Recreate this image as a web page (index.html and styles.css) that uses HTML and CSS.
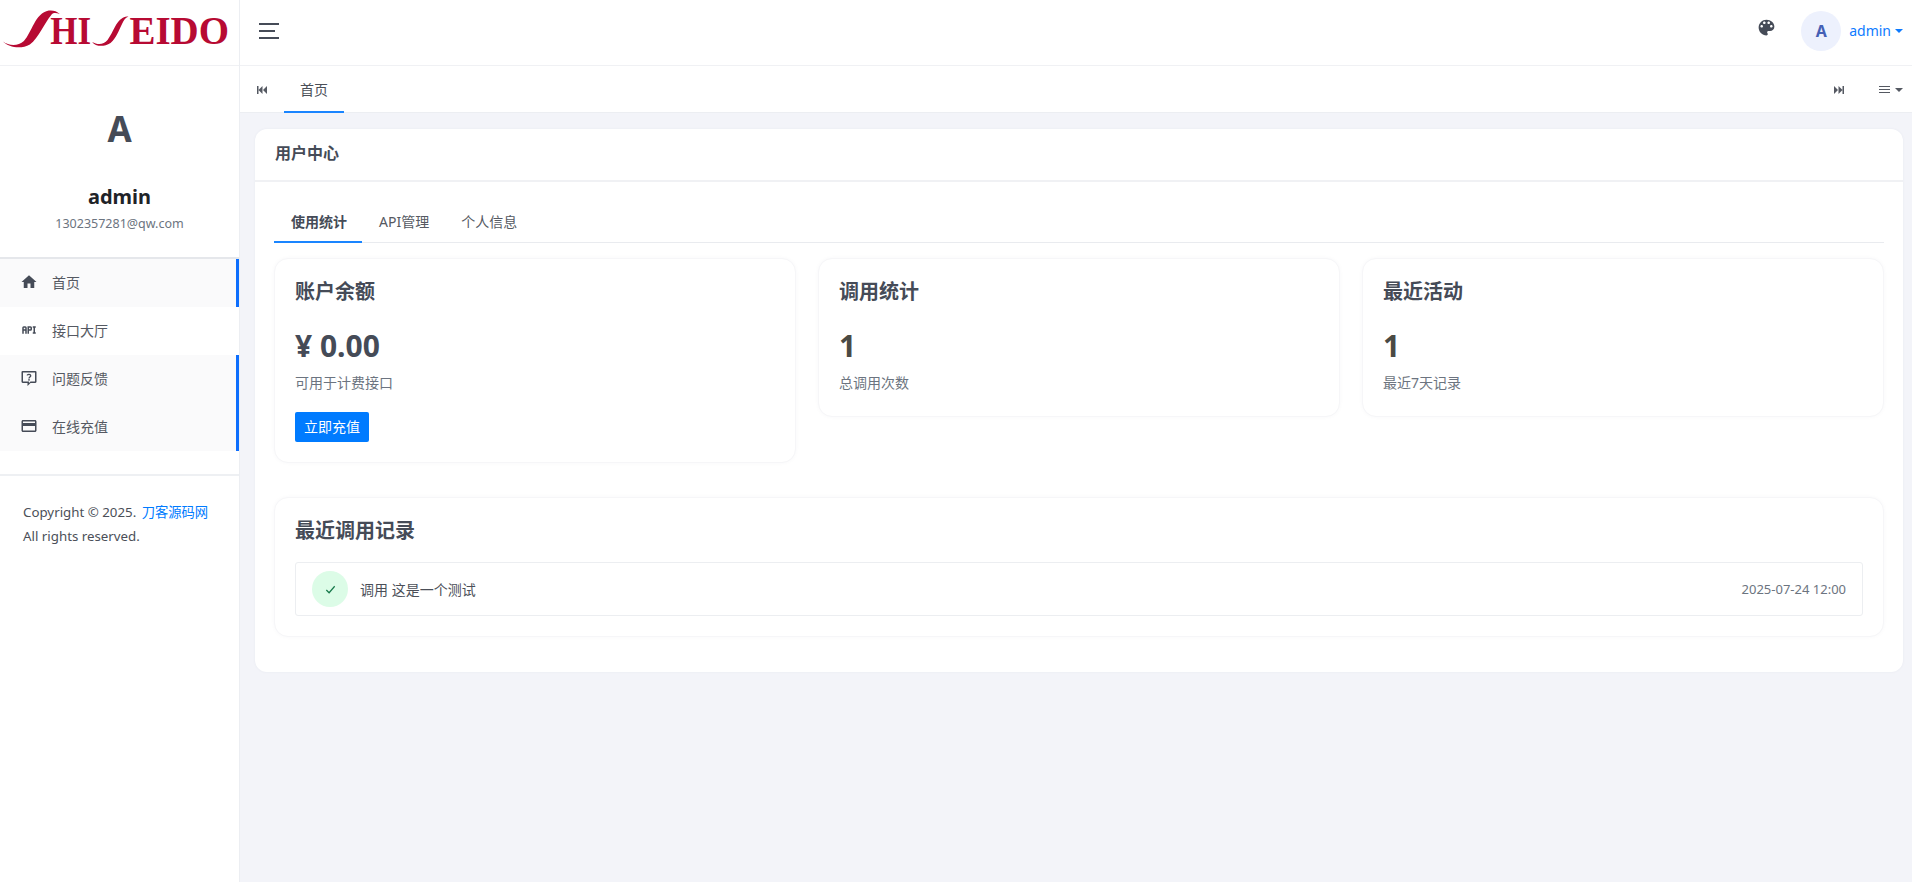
FILE: index.html
```html
<!DOCTYPE html>
<html lang="zh-CN">
<head>
<meta charset="utf-8">
<title>用户中心</title>
<link rel="stylesheet" href="styles.css">
</head>
<body>
<div class="app">
  <aside class="sidebar">
    <div class="logo">
      <svg class="logo-svg" viewBox="0 0 240 65" aria-label="SHISEIDO">
        <path class="logo-ink" d="M3 41.500C9 46 18 46.500 24 41C32 33 35 13 49 10.500C53 10 57 11 60 14C56 12.500 53 12.500 51.500 15C44 24 39 38 30 44.500C21 49.500 9 47.500 3 41.500Z"/>
        <text class="logo-text" x="50.500" y="44" textLength="41" lengthAdjust="spacingAndGlyphs">HI</text>
        <path class="logo-ink" d="M92.500 42C98 45 104 45 108 40C114 32 116 22 123 18C125 16.800 127 16.500 129 16.500C125.500 18 124.500 20 123 23C119 31 117 38 111 43C104 47.500 96 46.500 92.500 42Z"/>
        <text class="logo-text" x="130" y="44" textLength="100" lengthAdjust="spacingAndGlyphs">EIDO</text>
      </svg>
    </div>
    <div class="profile">
      <div class="profile-letter">A</div>
      <div class="profile-name">admin</div>
      <div class="profile-mail">1302357281@qw.com</div>
    </div>
    <nav class="menu">
      <a class="menu-item is-marked">
        <svg class="menu-icon" viewBox="0 0 24 24"><path d="M10 20v-6h4v6h5v-8h3L12 3 2 12h3v8z"/></svg>
        <span>首页</span>
      </a>
      <a class="menu-item">
        <svg class="menu-icon" viewBox="0 0 24 24"><path d="M7 7H5A2 2 0 0 0 3 9V17H5V13H7V17H9V9A2 2 0 0 0 7 7M7 11H5V9H7M14 7H10V17H12V13H14A2 2 0 0 0 16 11V9A2 2 0 0 0 14 7M14 11H12V9H14M20 9V15H21V17H17V15H18V9H17V7H21V9Z"/></svg>
        <span>接口大厅</span>
      </a>
      <a class="menu-item is-marked">
        <svg class="menu-icon" viewBox="0 0 24 24"><path fill-rule="evenodd" d="M3.500 2.500h17a1.500 1.500 0 0 1 1.500 1.500v13a1.500 1.500 0 0 1-1.500 1.500H14l-4 4v-4H3.500A1.500 1.500 0 0 1 2 17V4a1.500 1.500 0 0 1 1.500-1.500zM4 4.500v12h8v2l2-2h6v-12z"/><path class="menu-q" d="M9.500 8.500C9.800 6.800 14.300 6.700 14.300 9C14.300 10.800 12 10.600 12 12.500"/><rect x="11" y="13.500" width="2" height="2"/></svg>
        <span>问题反馈</span>
      </a>
      <a class="menu-item is-marked">
        <svg class="menu-icon" viewBox="0 0 24 24"><path d="M20 4H4c-1.110 0-1.990.890-1.990 2L2 18c0 1.110.890 2 2 2h16c1.110 0 2-.890 2-2V6c0-1.110-.890-2-2-2zm0 14H4v-6h16v6zm0-10H4V6h16v2z"/></svg>
        <span>在线充值</span>
      </a>
    </nav>
    <div class="copyright">
      <div>Copyright © 2025. <a class="link">刀客源码网</a></div>
      <div>All rights reserved.</div>
    </div>
  </aside>
  <div class="main">
    <header class="topbar">
      <button class="burger"><i class="long"></i><i class="short"></i><i class="long"></i></button>
      <div class="topbar-right">
        <svg class="palette" viewBox="0 0 24 24"><path d="M12 3c-4.970 0-9 4.030-9 9s4.030 9 9 9c.830 0 1.500-.670 1.500-1.500 0-.390-.150-.740-.390-1.010-.230-.260-.380-.610-.380-.990 0-.830.670-1.500 1.500-1.500H16c2.760 0 5-2.240 5-5 0-4.420-4.030-8-9-8zm-5.500 9c-.830 0-1.500-.670-1.500-1.500S5.670 9 6.500 9 8 9.670 8 10.500 7.330 12 6.500 12zm3-4C8.670 8 8 7.330 8 6.500S8.670 5 9.500 5s1.500.670 1.500 1.500S10.330 8 9.500 8zm5 0c-.830 0-1.500-.670-1.500-1.500S13.670 5 14.500 5s1.500.670 1.500 1.500S15.330 8 14.500 8zm3 4c-.830 0-1.500-.670-1.500-1.500S16.670 9 17.500 9s1.500.670 1.500 1.500-.670 1.500-1.500 1.500z"/></svg>
        <div class="avatar">A</div>
        <a class="user">admin<i class="caret"></i></a>
      </div>
    </header>
    <div class="tabbar">
      <svg class="skip" viewBox="0 0 10 8"><path d="M0 0h1.500v8H0zM5.500 0v8L1.500 4zM10 0v8L6 4z"/></svg>
      <a class="page-tab">首页</a>
      <div class="tabbar-right">
        <svg class="skip" viewBox="0 0 10 8"><path d="M10 0H8.500v8H10zM4.500 0v8l4-4zM0 0v8l4-4z"/></svg>
        <div class="tab-menu">
          <span class="lines"><i></i><i></i><i></i></span><i class="caret dark"></i>
        </div>
      </div>
    </div>
    <main class="content">
      <section class="panel">
        <div class="panel-head">用户中心</div>
        <div class="panel-body">
          <div class="tabs">
            <a class="tab active">使用统计</a>
            <a class="tab">API管理</a>
            <a class="tab">个人信息</a>
          </div>
          <div class="stats">
            <div class="card">
              <h3 class="card-title">账户余额</h3>
              <div class="card-value">¥ 0.00</div>
              <p class="card-desc">可用于计费接口</p>
              <a class="btn">立即充值</a>
            </div>
            <div class="card">
              <h3 class="card-title">调用统计</h3>
              <div class="card-value warm">1</div>
              <p class="card-desc">总调用次数</p>
            </div>
            <div class="card">
              <h3 class="card-title">最近活动</h3>
              <div class="card-value warm">1</div>
              <p class="card-desc">最近7天记录</p>
            </div>
          </div>
          <div class="card records">
            <h3 class="card-title">最近调用记录</h3>
            <div class="record">
              <div class="check">
                <svg viewBox="0 0 14 14"><path d="M2.500 7.500l3 3 6-7"/></svg>
              </div>
              <span class="record-text">调用 这是一个测试</span>
              <span class="record-time">2025-07-24 12:00</span>
            </div>
          </div>
        </div>
      </section>
    </main>
  </div>
</div>
</body>
</html>
```
FILE: styles.css
```css
* { box-sizing: border-box; }
html, body { margin: 0; height: 100%; overflow: hidden; }
body {
  font-family: "Noto Sans", "Noto Sans CJK SC", sans-serif;
  font-size: 14px;
  line-height: 21px;
  color: #4b4f58;
  background: #f3f4f9;
}
a { cursor: pointer; }
.app { display: flex; height: 882px; }

/* sidebar */
.sidebar {
  position: relative;
  z-index: 1;
  width: 239px;
  flex: none;
  background: #fff;
  box-shadow: 1px 0 0 #eceef2;
}
.logo { height: 66px; border-bottom: 1px solid #f0f1f4; }
.logo-svg { display: block; width: 239px; height: 65px; }
.logo-ink { fill: #b70a33; }
.logo-text {
  font-family: "Liberation Serif", serif;
  font-size: 40px;
  font-weight: 700;
  fill: #b70a33;
}
.profile {
  height: 193px;
  padding-top: 39px;
  text-align: center;
  border-bottom: 2px solid #e5e7eb;
}
.profile-letter { font-size: 35px; line-height: 48px; font-weight: 700; color: #454b57; }
.profile-name { margin-top: 30px; font-size: 20px; line-height: 28px; font-weight: 700; color: #1f2328; }
.profile-mail { margin-top: 3px; font-size: 12.500px; line-height: 20px; color: #6c7480; }
.menu { display: flex; flex-direction: column; }
.menu-item {
  height: 48px;
  display: flex;
  align-items: center;
  gap: 14px;
  padding: 0 3px 2px 20px;
  color: #555962;
}
.menu-item.is-marked { background: #fafafb; border-right: 3px solid #0d6efd; padding-right: 0; }
.menu-icon { width: 18px; height: 18px; fill: #454b57; flex: none; }
.menu-q { fill: none; stroke: #454b57; stroke-width: 1.800; }
.copyright {
  margin-top: 23px;
  padding: 24px 23px 0;
  border-top: 2px solid #eef0f3;
  line-height: 24px;
  font-size: 13.300px;
  color: #4b4f58;
}
.link { color: #007bff; margin-left: 2px; }

/* top */
.main { flex: 1; min-width: 0; display: flex; flex-direction: column; }
.topbar {
  height: 66px;
  background: #fff;
  border-bottom: 1px solid #f0f1f4;
  display: flex;
  align-items: center;
  justify-content: space-between;
  padding: 0 9px 4px 20px;
}
.burger {
  width: 20px;
  padding: 0;
  border: 0;
  background: none;
  display: flex;
  flex-direction: column;
  gap: 5px;
}
.burger i { display: block; height: 2px; background: #454b57; }
.burger .long { width: 20px; }
.burger .short { width: 16px; }
.topbar-right { display: flex; align-items: center; }
.palette { width: 21px; height: 21px; fill: #454b57; margin: -6px 24px 0 0; }
.avatar {
  width: 40px;
  height: 40px;
  border-radius: 50%;
  background: #edf1fd;
  color: #4560b5;
  font-weight: 700;
  font-size: 16px;
  line-height: 40px;
  text-align: center;
  margin-right: 8px;
}
.user { color: #0d7bff; font-size: 14px; display: flex; align-items: center; }
.caret {
  display: inline-block;
  margin-left: 4px;
  border-top: 4px solid #0d7bff;
  border-left: 4px solid transparent;
  border-right: 4px solid transparent;
}
.caret.dark { border-top-color: #555962; margin-left: 5px; }

.tabbar {
  height: 47px;
  background: #fff;
  border-bottom: 1px solid #eceef2;
  display: flex;
  align-items: stretch;
  padding: 1px 9px 0 18px;
}
.skip { width: 10px; height: 8px; fill: #555962; align-self: center; flex: none; }
.page-tab {
  margin-left: 17px;
  width: 60px;
  text-align: center;
  line-height: 45px;
  height: 46px;
  color: #4b4f58;
  border-bottom: 2px solid #1a85ff;
}
.tabbar-right { margin-left: auto; display: flex; align-items: center; gap: 35px; }
.tab-menu { display: flex; align-items: center; }
.lines { display: flex; flex-direction: column; gap: 2px; width: 11px; }
.lines i { display: block; height: 1px; background: #555962; }

/* content */
.content { flex: 1; padding: 16px 9px 0 16px; }
.panel {
  background: #fff;
  border-radius: 12px;
  box-shadow: 0 0 3px rgba(40, 50, 90, .05);
}
.panel-head {
  height: 53px;
  padding: 0 20px;
  line-height: 49px;
  font-size: 16px;
  font-weight: 600;
  color: #454b57;
  border-bottom: 2px solid #f0f1f4;
}
.panel-body { padding: 20px 19px 35px; }
.tabs { display: flex; height: 41px; border-bottom: 1px solid #e9ebef; }
.tab { height: 41px; padding: 0 15px 0 17px; line-height: 40px; color: #555962; }
.tab.active { font-weight: 600; color: #454b57; border-bottom: 2px solid #1a85ff; }
.stats {
  display: grid;
  grid-template-columns: repeat(3, 1fr);
  gap: 22px;
  align-items: start;
  margin-top: 15px;
}
.card {
  background: #fff;
  border: 1px solid #f6f6f8;
  border-radius: 14px;
  padding: 20px;
  box-shadow: 0 0 4px rgba(40, 50, 90, .03);
}
.card-title { margin: 0; font-size: 20px; line-height: 26px; font-weight: 700; color: #454b57; }
.card-value { margin-top: 21px; font-size: 30px; line-height: 40px; font-weight: 700; color: #454b57; }
.card-value.warm { color: #4a4a44; }
.card-desc { margin: 6px 0 3px; color: #6c7480; }
.btn {
  display: block;
  width: 74px;
  height: 30px;
  margin-top: 19px;
  background: #007bff;
  color: #fff;
  border-radius: 2px;
  text-align: center;
  line-height: 30px;
}
.records { margin-top: 34px; }
.record {
  margin-top: 18px;
  height: 54px;
  padding: 0 16px;
  border: 1px solid #eceef1;
  border-radius: 3px;
  display: flex;
  align-items: center;
}
.check {
  width: 36px;
  height: 36px;
  border-radius: 50%;
  background: #dcfce7;
  display: flex;
  align-items: center;
  justify-content: center;
  margin-right: 12px;
}
.check svg { width: 13px; height: 13px; fill: none; stroke: #16794a; stroke-width: 1.300; }
.record-text { color: #4b4f58; }
.record-time { margin-left: auto; font-size: 13px; color: #6c7480; }
```
